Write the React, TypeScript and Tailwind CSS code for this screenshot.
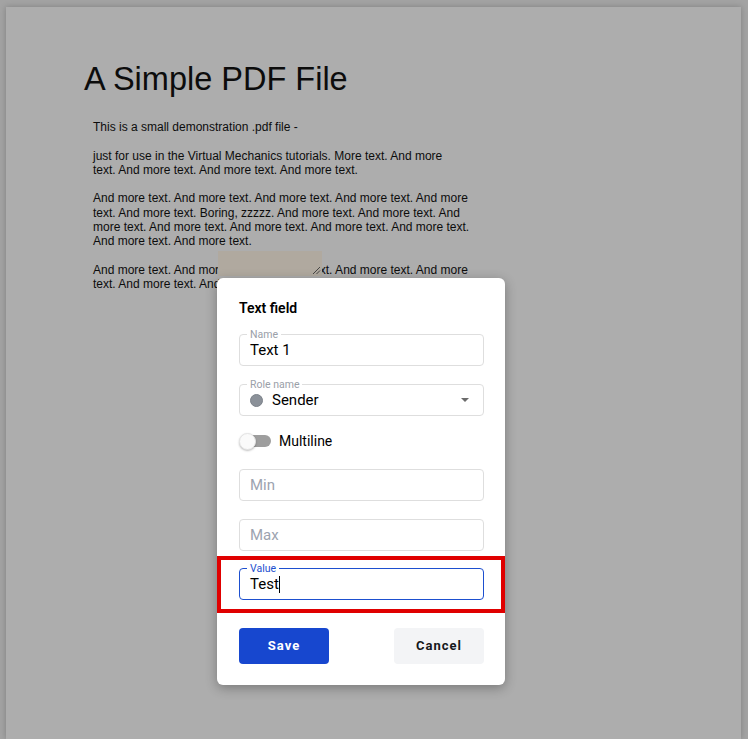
import type { ReactNode } from "react";

const roboto = { fontFamily: "Roboto, 'Noto Sans', sans-serif" };

function OutlinedField({
  label,
  active,
  children,
}: {
  label?: string;
  active?: boolean;
  children: ReactNode;
}) {
  return (
    <div
      className={`relative h-[32px] rounded-[4px] border flex items-center px-[10px] ${
        active ? "border-[#1d4fcf]" : "border-[#dedede]"
      }`}
    >
      {label ? (
        <span
          className={`absolute -top-[6px] left-[7px] px-[3px] bg-white text-[10.5px] leading-[11px] ${
            active ? "text-[#1d4fcf]" : "text-[#9aa0a8]"
          }`}
        >
          {label}
        </span>
      ) : null}
      {children}
    </div>
  );
}

const App = () => {
  return (
    <div className="relative w-full h-[739px] overflow-hidden bg-[#a3a3a3] pt-[7px] pl-[6px] pr-[7px]">
      {/* pdf page (dimmed behind the dialog) */}
      <div
        className="h-full bg-[#adadad] shadow-[0_0_6px_rgba(0,0,0,0.22)] pl-[78px] pt-[56px] text-[#0c0c0c]"
        style={{ fontFamily: "'Liberation Sans', Arial, sans-serif" }}
      >
        <h1 className="text-[32.5px] leading-[32px]">A Simple PDF File</h1>
        <div className="mt-[25px] ml-[9px] text-[12px] leading-[14.25px] whitespace-nowrap">
          <p>This is a small demonstration .pdf file -</p>
          <p className="mt-[14.25px]">
            just for use in the Virtual Mechanics tutorials. More text. And more
            <br />
            text. And more text. And more text. And more text.
          </p>
          <p className="mt-[14.25px]">
            And more text. And more text. And more text. And more text. And more
            <br />
            text. And more text. Boring, zzzzz. And more text. And more text. And
            <br />
            more text. And more text. And more text. And more text. And more text.
            <br />
            And more text. And more text.
          </p>
          <p className="mt-[14.25px]">
            And more text. And more text. And more text. And more text. And more
            <br />
            text. And more text. And more text.
          </p>
        </div>
      </div>

      {/* placed field on the page */}
      <div className="absolute left-[218px] top-[251px] w-[104px] h-[25px] bg-[#b0a99f]">
        <svg className="absolute right-[1px] bottom-[1px]" width="9" height="9" viewBox="0 0 9 9">
          <path d="M1 8 L8 1 M4.5 8 L8 4.5" stroke="#3a3a3a" strokeWidth="0.9" />
        </svg>
      </div>

      {/* dialog */}
      <div
        className="absolute left-[217px] top-[278px] w-[288px] bg-white rounded-[6px] shadow-[0_3px_12px_rgba(0,0,0,0.3)] pl-[22px] pr-[21px] pt-[20px] pb-[21px] text-[#111]"
        style={roboto}
      >
        <h3 className="text-[14px] leading-[20px] font-semibold text-black">Text field</h3>

        <div className="mt-[16px]">
          <OutlinedField label="Name">
            <span className="text-[15px] text-black">Text 1</span>
          </OutlinedField>
        </div>

        <div className="mt-[18px]">
          <OutlinedField label="Role name">
            <span className="w-[13px] h-[13px] rounded-full bg-[#8b9199] border border-[#7c828a]" />
            <span className="ml-[9px] text-[15px] text-black">Sender</span>
            <span className="ml-auto mr-[4px] w-0 h-0 border-l-[4px] border-r-[4px] border-t-[4px] border-l-transparent border-r-transparent border-t-[#6b6b6b]" />
          </OutlinedField>
        </div>

        <div className="mt-[15px] h-[20px] flex items-center">
          <div className="relative w-[32px] h-[17px] flex items-center">
            <div className="ml-[4px] w-[28px] h-[12px] rounded-full bg-[#9e9e9e]" />
            <div className="absolute left-0 top-0 w-[17px] h-[17px] rounded-full bg-[#fafafa] border border-[#e4e4e4] shadow-[0_1px_2px_rgba(0,0,0,0.25)]" />
          </div>
          <span className="ml-[8px] text-[14px] text-black">Multiline</span>
        </div>

        <div className="mt-[18px]">
          <OutlinedField>
            <span className="text-[15px] text-[#9ca3af]">Min</span>
          </OutlinedField>
        </div>

        <div className="mt-[18px]">
          <OutlinedField>
            <span className="text-[15px] text-[#9ca3af]">Max</span>
          </OutlinedField>
        </div>

        <div className="mt-[5px] -ml-[22px] -mr-[21px] border-4 border-[#e00000] pl-[18px] pr-[17px] pt-[8px] pb-[9px]">
          <OutlinedField label="Value" active>
            <span className="text-[15px] text-black">Test</span>
            <span className="w-px h-[17px] bg-black" />
          </OutlinedField>
        </div>

        <div className="mt-[15px] flex justify-between">
          <button className="w-[90px] h-[36px] rounded-[4px] bg-[#1747cf] text-white text-[13px] font-bold tracking-[1px]">
            Save
          </button>
          <button className="w-[90px] h-[36px] rounded-[4px] bg-[#f3f4f6] text-[#16181c] text-[13px] font-bold tracking-[1px]">
            Cancel
          </button>
        </div>
      </div>
    </div>
  );
};

export default App;
